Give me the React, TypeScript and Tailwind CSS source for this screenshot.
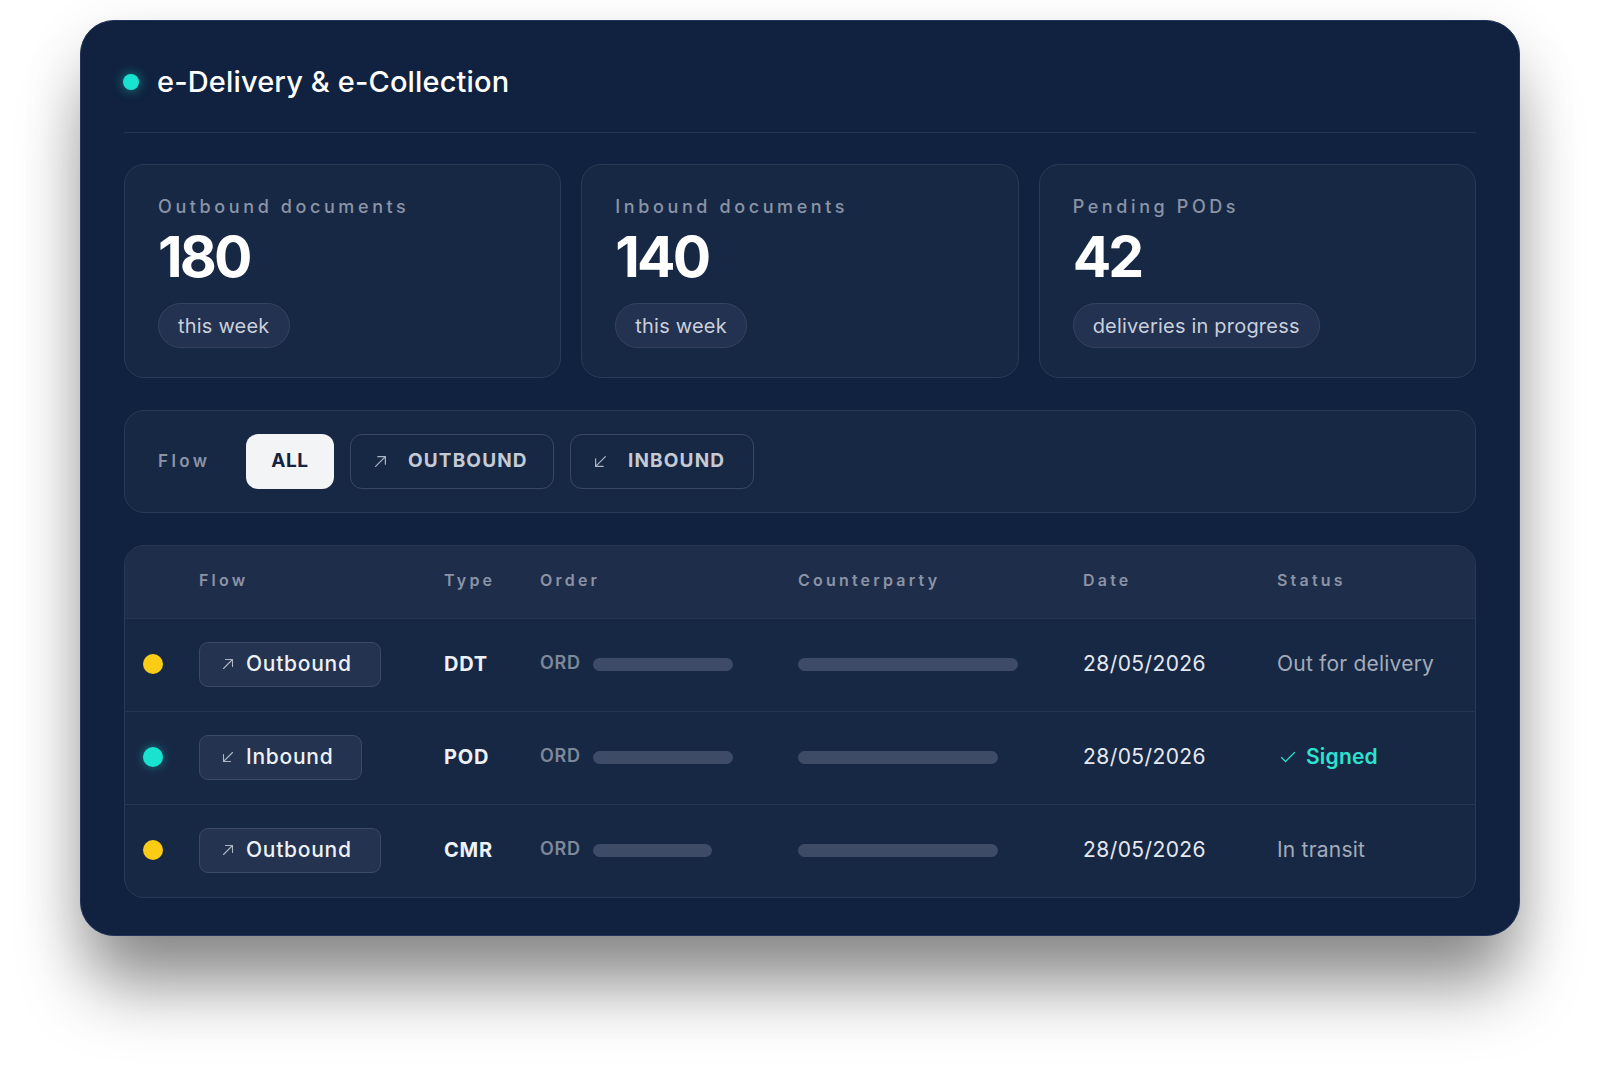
import { ArrowDownLeft, ArrowUpRight } from 'lucide-react'

type Row = {
  dot: 'yellow' | 'teal'
  flow: 'Outbound' | 'Inbound'
  type: string
  orderBar: string
  partyBar: string
  date: string
  status: string
  signed?: boolean
}

const rows: Row[] = [
  { dot: 'yellow', flow: 'Outbound', type: 'DDT', orderBar: 'w-[140px]', partyBar: 'w-[220px]', date: '28/05/2026', status: 'Out for delivery' },
  { dot: 'teal', flow: 'Inbound', type: 'POD', orderBar: 'w-[140px]', partyBar: 'w-[200px]', date: '28/05/2026', status: 'Signed', signed: true },
  { dot: 'yellow', flow: 'Outbound', type: 'CMR', orderBar: 'w-[119px]', partyBar: 'w-[200px]', date: '28/05/2026', status: 'In transit' },
]

// thin arrow, drawn to fill its box like the reference glyph
function Arrow({ dir, className }: { dir: 'out' | 'in'; className?: string }) {
  return (
    <svg viewBox="0 0 12 12" fill="none" stroke="currentColor" strokeWidth={1.1} strokeLinecap="round" className={className}>
      {dir === 'out' ? <path d="M1.5 10.5 10.5 1.5M3.5 1.5h7v7" /> : <path d="M10.5 1.5 1.5 10.5M1.5 3.5v7h7" />}
    </svg>
  )
}

function StatCard({ label, value, note }: { label: string; value: string; note: string }) {
  return (
    <div className="h-[214px] rounded-[20px] border border-[#2a3a57] bg-[#172845] pl-[33px] pt-[30px]">
      <div className="text-[18px] font-medium leading-[24px] tracking-[0.2em] text-[#8b94a6]">{label}</div>
      <div className="mt-[4px] text-[57px] font-bold leading-[68px] tracking-[-0.05em] text-white">{value}</div>
      <div className="mt-[12px] inline-flex h-[45px] items-center rounded-full border border-[#34445f] bg-[#233250] px-[19px] text-[20px] tracking-[0.01em] text-[#c9d0dc]">
        {note}
      </div>
    </div>
  )
}

function FlowBadge({ flow }: { flow: Row['flow'] }) {
  return (
    <div className="inline-flex h-[45px] items-center gap-[12px] rounded-[9px] border border-[#3b4a66] bg-[#233350] pl-[22px] pr-[28px]">
      <Arrow dir={flow === 'Outbound' ? 'out' : 'in'} className="h-[12px] w-[12px] text-[#aeb6c4]" />
      <span className="text-[21px] font-medium tracking-[0.035em] text-[#eef1f5]">{flow}</span>
    </div>
  )
}

export default function App() {
  return (
    <div className="h-[1077px] w-full overflow-hidden bg-white pt-5 font-['Inter',sans-serif]">
      <div className="mx-20 h-[916px] rounded-[34px] border border-[#22345a] bg-[#10223f] px-[43px] pt-[44px] shadow-[0_60px_70px_-10px_rgba(0,0,0,0.4),0_20px_60px_rgba(0,0,0,0.14)]">
        <div className="flex h-[34px] items-center gap-[18px]">
          <span className="ml-[-1px] h-4 w-4 rounded-full bg-[#19e3cf] shadow-[0_0_12px_rgba(25,227,207,0.55)]" />
          <h1 className="text-[29px] font-medium tracking-[0.005em] text-white">e-Delivery &amp; e-Collection</h1>
        </div>

        <div className="mt-[33px] h-px bg-[#233454]" />

        <div className="mt-[31px] grid grid-cols-3 gap-5">
          <StatCard label="Outbound documents" value="180" note="this week" />
          <StatCard label="Inbound documents" value="140" note="this week" />
          <StatCard label="Pending PODs" value="42" note="deliveries in progress" />
        </div>

        <div className="mt-[32px] flex h-[103px] items-center rounded-[20px] border border-[#293a57] bg-[#172845] pl-[33px]">
          <span className="w-[88px] text-[17px] font-semibold tracking-[0.2em] text-[#8b94a6]">Flow</span>
          <div className="flex gap-4">
            <button className="h-[55px] w-[88px] rounded-[12px] bg-[#f3f4f6] text-[19px] font-bold tracking-[0.03em] text-[#14233f]">ALL</button>
            <button className="flex h-[55px] w-[204px] items-center gap-[21px] rounded-[12px] border border-[#3a4866] pl-[23px] text-[19px] font-bold tracking-[0.06em] text-[#c5cad4]">
              <Arrow dir="out" className="h-[13px] w-[13px] text-[#aeb6c4]" />
              OUTBOUND
            </button>
            <button className="flex h-[55px] w-[184px] items-center gap-[21px] rounded-[12px] border border-[#3a4866] pl-[23px] text-[19px] font-bold tracking-[0.06em] text-[#c5cad4]">
              <Arrow dir="in" className="h-[13px] w-[13px] text-[#aeb6c4]" />
              INBOUND
            </button>
          </div>
        </div>

        <div className="mt-[32px] overflow-hidden rounded-[20px] border border-[#293a57] bg-[#172845]">
          <div className="grid h-[72px] grid-cols-[74px_245px_96px_258px_285px_194px_1fr] items-center bg-[#1e2d4a] pb-[5px] text-[16px] font-semibold tracking-[0.2em] text-[#8b94a6]">
            <span />
            <span>Flow</span>
            <span>Type</span>
            <span>Order</span>
            <span>Counterparty</span>
            <span>Date</span>
            <span>Status</span>
          </div>
          {rows.map((r, i) => (
            <div
              key={i}
              className="grid h-[93px] grid-cols-[74px_245px_96px_258px_285px_194px_1fr] items-center border-t border-[#253654] pb-[2px]"
            >
              <span className="pl-[18px]">
                <span
                  className={
                    r.dot === 'yellow'
                      ? 'block h-5 w-5 rounded-full bg-[#facc15]'
                      : 'block h-5 w-5 rounded-full bg-[#19e3cf] shadow-[0_0_10px_rgba(25,227,207,0.45)]'
                  }
                />
              </span>
              <span>
                <FlowBadge flow={r.flow} />
              </span>
              <span className="text-[20px] font-bold tracking-[0.04em] text-[#eef1f5]">{r.type}</span>
              <span className="flex items-center gap-[12px]">
                <span className="mb-[3px] text-[18px] font-semibold tracking-[0.04em] text-[#7e889b]">ORD</span>
                <span className={`h-[13px] rounded-full bg-[#3d4b66] ${r.orderBar}`} />
              </span>
              <span>
                <span className={`block h-[13px] rounded-full bg-[#3d4b66] ${r.partyBar}`} />
              </span>
              <span className="text-[21px] tracking-[0.02em] text-[#e5e8ee]">{r.date}</span>
              {r.signed ? (
                <span className="flex items-center gap-[10px] pl-[3px] text-[21px] font-semibold tracking-[0.01em] text-[#2de2cf]">
                  <svg viewBox="0 0 16 16" fill="none" stroke="currentColor" strokeWidth={1.2} strokeLinecap="round" strokeLinejoin="round" className="h-[16px] w-[16px]">
                    <path d="M1.5 8.5 5.5 12.5 14.5 3.5" />
                  </svg>
                  {r.status}
                </span>
              ) : (
                <span className="text-[21px] tracking-[0.01em] text-[#a3abb9]">{r.status}</span>
              )}
            </div>
          ))}
        </div>
      </div>
    </div>
  )
}
